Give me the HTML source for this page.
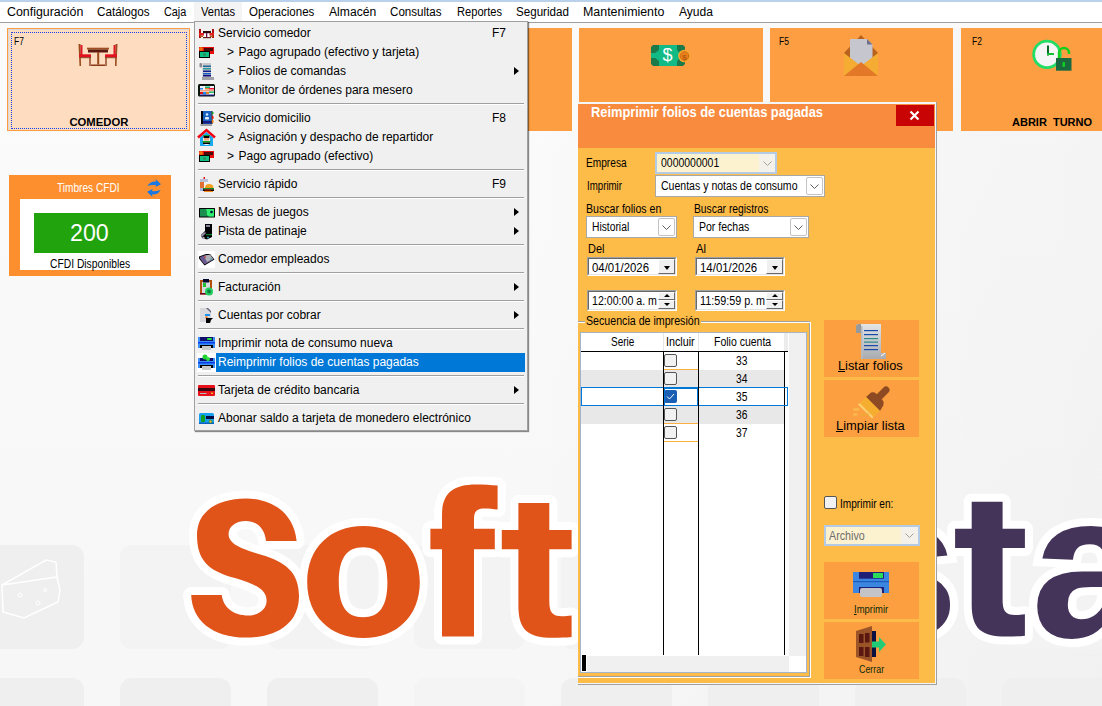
<!DOCTYPE html>
<html><head><meta charset="utf-8">
<style>
*{margin:0;padding:0;box-sizing:border-box}
html,body{width:1102px;height:706px;overflow:hidden;font-family:"Liberation Sans",sans-serif;position:relative}
body{background:linear-gradient(#fbfbfb 0px,#f9f9f9 350px,#f8f8f8 500px,#f7f7f7 706px)}
.a{position:absolute}
.t{position:absolute;white-space:nowrap;line-height:1}
.wm{position:absolute;background:#ebebeb;border-radius:12px}
.lg{position:absolute;font-weight:bold;font-size:191px;line-height:1;white-space:nowrap;transform-origin:0 0}
.lo{color:#fff;-webkit-text-stroke:15px #fff}
.mi{position:absolute;font-size:12px;line-height:19px;height:19px;white-space:nowrap;color:#000}
.sep{position:absolute;left:198px;width:326px;height:1px;background:#a0a0a0;box-shadow:0 1px 0 #fff}
.arr{position:absolute;left:513.5px;width:0;height:0;border-left:5px solid #000;border-top:4px solid transparent;border-bottom:4px solid transparent}
.ic{position:absolute}
</style></head>
<body>

<div class="a" style="left:0px;top:0px;width:1102px;height:2px;background:#b9d1ea"></div>
<div class="a" style="left:0px;top:2px;width:1102px;height:20px;background:#fff"></div>
<div class="a" style="left:0px;top:22px;width:1102px;height:1px;background:#a0a0a0"></div>
<div class="a" style="left:0px;top:23px;width:1102px;height:5px;background:#fafafa"></div>
<div class="a" style="left:194px;top:2px;width:48px;height:19px;background:#f4f4f4"></div>
<div class="t" style="left:7.30px;top:5.84px;font-size:12px;color:#000;font-weight:normal;transform:scaleX(1.0317);transform-origin:0 0;">Configuración</div>
<div class="t" style="left:97.30px;top:5.84px;font-size:12px;color:#000;font-weight:normal;transform:scaleX(0.9753);transform-origin:0 0;">Catálogos</div>
<div class="t" style="left:164.40px;top:5.84px;font-size:12px;color:#000;font-weight:normal;transform:scaleX(0.9038);transform-origin:0 0;">Caja</div>
<div class="t" style="left:200.70px;top:5.84px;font-size:12px;color:#000;font-weight:normal;transform:scaleX(0.9292);transform-origin:0 0;">Ventas</div>
<div class="t" style="left:249.40px;top:5.84px;font-size:12px;color:#000;font-weight:normal;transform:scaleX(0.9597);transform-origin:0 0;">Operaciones</div>
<div class="t" style="left:329.20px;top:5.84px;font-size:12px;color:#000;font-weight:normal;transform:scaleX(1.0106);transform-origin:0 0;">Almacén</div>
<div class="t" style="left:390.30px;top:5.84px;font-size:12px;color:#000;font-weight:normal;transform:scaleX(0.9670);transform-origin:0 0;">Consultas</div>
<div class="t" style="left:456.60px;top:5.84px;font-size:12px;color:#000;font-weight:normal;transform:scaleX(0.9262);transform-origin:0 0;">Reportes</div>
<div class="t" style="left:516.40px;top:5.84px;font-size:12px;color:#000;font-weight:normal;transform:scaleX(0.9660);transform-origin:0 0;">Seguridad</div>
<div class="t" style="left:583.30px;top:5.84px;font-size:12px;color:#000;font-weight:normal;transform:scaleX(1.0337);transform-origin:0 0;">Mantenimiento</div>
<div class="t" style="left:678.70px;top:5.84px;font-size:12px;color:#000;font-weight:normal;transform:scaleX(1.0048);transform-origin:0 0;">Ayuda</div>
<div class="a" style="left:0px;top:28px;width:1102px;height:678px;background:linear-gradient(to right,rgba(0,0,0,0) 0px,rgba(0,0,0,0) 500px,rgba(0,0,0,0.022) 1102px)"></div>
<div class="a" style="left:-27px;top:545px;width:111px;height:104px;background:#efefef;border-radius:12px"></div>
<div class="a" style="left:120px;top:545px;width:111px;height:104px;background:#f3f3f3;border-radius:12px"></div>
<div class="a" style="left:267px;top:545px;width:111px;height:104px;background:#f3f3f3;border-radius:12px"></div>
<div class="a" style="left:414px;top:545px;width:111px;height:104px;background:#f3f3f3;border-radius:12px"></div>
<div class="a" style="left:561px;top:545px;width:111px;height:104px;background:#f3f3f3;border-radius:12px"></div>
<div class="a" style="left:708px;top:545px;width:111px;height:104px;background:#f3f3f3;border-radius:12px"></div>
<div class="a" style="left:855px;top:545px;width:111px;height:104px;background:#f3f3f3;border-radius:12px"></div>
<div class="a" style="left:1002px;top:545px;width:111px;height:104px;background:#f3f3f3;border-radius:12px"></div>
<div class="a" style="left:-27px;top:678px;width:111px;height:104px;background:#efefef;border-radius:12px"></div>
<div class="a" style="left:120px;top:678px;width:111px;height:104px;background:#efefef;border-radius:12px"></div>
<div class="a" style="left:267px;top:678px;width:111px;height:104px;background:#efefef;border-radius:12px"></div>
<div class="a" style="left:414px;top:678px;width:111px;height:104px;background:#f4f4f4;border-radius:12px"></div>
<div class="a" style="left:561px;top:678px;width:111px;height:104px;background:#efefef;border-radius:12px"></div>
<div class="a" style="left:708px;top:678px;width:111px;height:104px;background:#efefef;border-radius:12px"></div>
<div class="a" style="left:855px;top:678px;width:111px;height:104px;background:#efefef;border-radius:12px"></div>
<div class="a" style="left:1002px;top:678px;width:111px;height:104px;background:#efefef;border-radius:12px"></div>
<svg class="a" style="left:0;top:540px" width="90" height="110" viewBox="0 540 90 110"><path d="M2 585L46 560L56 562L57 577L60 590L58 602L24 618L3 612Z M2 585L57 577" stroke="#fff" stroke-width="1.5" fill="none"/><circle cx="20" cy="595" r="2" stroke="#fff" fill="none"/><circle cx="38" cy="603" r="2" stroke="#fff" fill="none"/><circle cx="45" cy="590" r="1.5" stroke="#fff" fill="none"/></svg>
<svg class="a" style="left:0;top:0" width="1102" height="706"><path d="M246 498.5C272 498.5 294 513 296.6 541L266 541C265 529 257 521 246 521C235 521 228.6 527 228.6 534C228.6 543 238 548 262 555C285 562 299 572 299 596C299 624 276 637.6 246 637.6C212 637.6 192 620 191.2 595L221.8 595C223 607 233 615.5 248.5 615.5C259 615.5 266.6 609 266.6 600.8C266.6 590 258 585 235 578C208 571 197 560 197 535C197 511 218 498.5 246 498.5Z" fill="#fff" stroke="#fff" stroke-width="16" stroke-linejoin="round"/></svg>
<svg class="a" style="left:0;top:0" width="1102" height="706"><path d="M307.2 582.0C307.2 548.4 329.7 526.0 363.5 526.0C397.3 526.0 419.8 548.4 419.8 582.0C419.8 615.6 397.3 638.0 363.5 638.0C329.7 638.0 307.2 615.6 307.2 582.0ZM338.8 582.2C338.8 558.4 346.6 547.2 363.1 547.2C379.6 547.2 387.4 558.4 387.4 582.2C387.4 606.0 379.6 617.2 363.1 617.2C346.6 617.2 338.8 606.0 338.8 582.2Z" fill="#fff" fill-rule="evenodd" stroke="#fff" stroke-width="16"/></svg>
<svg class="a" style="left:0;top:0" width="1102" height="706"><path d="M442 636.5V549.2H430.4V528.8H442V515C442 494 452 484.5 476 484.5C484 484.5 491 485 497.6 485.5V509.5C493 509 489 508.5 485 508.5C477 508.5 474 511 474 519V528.8H494.8V549.2H474V636.5Z" fill="#fff" stroke="#fff" stroke-width="16" stroke-linejoin="round"/></svg>
<svg class="a" style="left:0;top:0" width="1102" height="706"><path d="M518.4 503H549.3V530.1H571.6V549.3H549.3V601C549.3 612 552 616.3 562 616.3C565 616.3 568 616 571.6 615.5V637C566 637.6 560 637.8 553 637.8C528 637.8 518.4 630 518.4 606V549.3H501.8V530.1H518.4Z" fill="#fff" stroke="#fff" stroke-width="16" stroke-linejoin="round"/></svg>
<div class="lg lo" style="left:840.3px;top:462.5px;transform:scale(1.118,1.076)">s</div>
<svg class="a" style="left:0;top:0" width="1102" height="706"><path d="M518.4 503H549.3V530.1H571.6V549.3H549.3V601C549.3 612 552 616.3 562 616.3C565 616.3 568 616 571.6 615.5V637C566 637.6 560 637.8 553 637.8C528 637.8 518.4 630 518.4 606V549.3H501.8V530.1H518.4Z" transform="translate(453.3,-1.3)" fill="#fff" stroke="#fff" stroke-width="16" stroke-linejoin="round"/></svg>
<div class="lg lo" style="left:1031.3px;top:462.5px;transform:scale(1.118,1.076)">a</div>
<svg class="a" style="left:0;top:0" width="1102" height="706"><path d="M246 498.5C272 498.5 294 513 296.6 541L266 541C265 529 257 521 246 521C235 521 228.6 527 228.6 534C228.6 543 238 548 262 555C285 562 299 572 299 596C299 624 276 637.6 246 637.6C212 637.6 192 620 191.2 595L221.8 595C223 607 233 615.5 248.5 615.5C259 615.5 266.6 609 266.6 600.8C266.6 590 258 585 235 578C208 571 197 560 197 535C197 511 218 498.5 246 498.5Z" fill="#e0541a"/></svg>
<svg class="a" style="left:0;top:0" width="1102" height="706"><path d="M307.2 582.0C307.2 548.4 329.7 526.0 363.5 526.0C397.3 526.0 419.8 548.4 419.8 582.0C419.8 615.6 397.3 638.0 363.5 638.0C329.7 638.0 307.2 615.6 307.2 582.0ZM338.8 582.2C338.8 558.4 346.6 547.2 363.1 547.2C379.6 547.2 387.4 558.4 387.4 582.2C387.4 606.0 379.6 617.2 363.1 617.2C346.6 617.2 338.8 606.0 338.8 582.2Z" fill="#e0541a" fill-rule="evenodd"/></svg>
<svg class="a" style="left:0;top:0" width="1102" height="706"><path d="M442 636.5V549.2H430.4V528.8H442V515C442 494 452 484.5 476 484.5C484 484.5 491 485 497.6 485.5V509.5C493 509 489 508.5 485 508.5C477 508.5 474 511 474 519V528.8H494.8V549.2H474V636.5Z" fill="#e0541a"/></svg>
<svg class="a" style="left:0;top:0" width="1102" height="706"><path d="M518.4 503H549.3V530.1H571.6V549.3H549.3V601C549.3 612 552 616.3 562 616.3C565 616.3 568 616 571.6 615.5V637C566 637.6 560 637.8 553 637.8C528 637.8 518.4 630 518.4 606V549.3H501.8V530.1H518.4Z" fill="#e0541a"/></svg>
<div class="lg" style="left:840.3px;top:462.5px;transform:scale(1.118,1.076);color:#45345a">s</div>
<svg class="a" style="left:0;top:0" width="1102" height="706"><path d="M518.4 503H549.3V530.1H571.6V549.3H549.3V601C549.3 612 552 616.3 562 616.3C565 616.3 568 616 571.6 615.5V637C566 637.6 560 637.8 553 637.8C528 637.8 518.4 630 518.4 606V549.3H501.8V530.1H518.4Z" transform="translate(453.3,-1.3)" fill="#45345a"/></svg>
<div class="lg" style="left:1031.3px;top:462.5px;transform:scale(1.118,1.076);color:#45345a">a</div>
<div class="a" style="left:7px;top:28px;width:183px;height:103px;background:#fddcbf;border:1px solid #fb9d40;box-shadow:inset 1px 1px 0 #d8d8e0"></div>
<div class="a" style="left:11px;top:32px;width:176px;height:97px;border:1px dotted #1a3ee8"></div>
<div class="t" style="left:13.60px;top:36.93px;font-size:10px;color:#000;font-weight:normal;transform:scaleX(0.8506);transform-origin:0 0;">F7</div>
<div class="t" style="left:69.4px;top:117.33px;font-size:11.3px;letter-spacing:0px;color:#000;font-weight:bold;">COMEDOR</div>
<div class="a" style="left:195px;top:28px;width:377px;height:103px;background:#fc9e41"></div>
<div class="a" style="left:579px;top:28px;width:184px;height:103px;background:#fc9e41"></div>
<div class="a" style="left:770px;top:28px;width:183px;height:103px;background:#fc9e41"></div>
<div class="t" style="left:778.60px;top:36.93px;font-size:10px;color:#000;font-weight:normal;transform:scaleX(0.8506);transform-origin:0 0;">F5</div>
<div class="a" style="left:961px;top:28px;width:141px;height:103px;background:#fc9e41"></div>
<div class="t" style="left:971.70px;top:36.93px;font-size:10px;color:#000;font-weight:normal;transform:scaleX(0.8506);transform-origin:0 0;">F2</div>
<div class="t" style="left:1012px;top:117.19px;font-size:11px;letter-spacing:0px;color:#000;font-weight:bold;">ABRIR&nbsp;&nbsp;TURNO</div>
<div class="a" style="left:9px;top:175px;width:162px;height:101px;background:#fd8f2f"></div>
<div class="t" style="left:57.00px;top:181.84px;font-size:12px;color:#fff;font-weight:normal;transform:scaleX(0.8432);transform-origin:0 0;">Timbres CFDI</div>
<div class="a" style="left:20px;top:199px;width:140px;height:71px;background:#fff"></div>
<div class="a" style="left:34px;top:213px;width:114px;height:40px;background:#21a30d"></div>
<div class="t" style="left:69.71px;top:222.31px;font-size:23.5px;color:#fff;font-weight:normal;transform:scaleX(0.9859);transform-origin:0 0;">200</div>
<div class="t" style="left:49.90px;top:257.84px;font-size:12px;color:#000;font-weight:normal;transform:scaleX(0.8579);transform-origin:0 0;">CFDI Disponibles</div>

<svg class="a" style="left:0;top:0" width="1102" height="706" viewBox="0 0 1102 706">
 <!-- table & chairs -->
 <g>
  <path d="M78.5 44L80.5 44L81 66L79.5 66Z" fill="#9a4a1c"/>
  <rect x="80.5" y="45" width="2" height="10" fill="#e01828"/>
  <rect x="79" y="54.3" width="12" height="3" fill="#e0101c"/>
  <rect x="80" y="57.2" width="11" height="1" fill="#8a4020"/>
  <rect x="89.3" y="57" width="1.4" height="9" fill="#8a4020"/>
  <rect x="87" y="47.7" width="22" height="1.8" fill="#a05020"/>
  <rect x="88" y="49.5" width="20" height="3" fill="#5a1a10"/>
  <rect x="97.2" y="52" width="2" height="12.5" fill="#9a4a1c"/>
  <rect x="91" y="64.5" width="14" height="1.5" fill="#8a3a18"/>
  <path d="M115.5 44L117.5 44L116.5 66L115 66Z" fill="#9a4a1c"/>
  <rect x="113.5" y="45" width="2" height="10" fill="#e01828"/>
  <rect x="105" y="54.3" width="12" height="3" fill="#e0101c"/>
  <rect x="105" y="57.2" width="11" height="1" fill="#8a4020"/>
  <rect x="105.3" y="57" width="1.4" height="9" fill="#8a4020"/>
 </g>
 <!-- money -->
 <g>
  <path d="M653 45H683L685 47V64L683 66H653L651 64V47Z" fill="#1a7a4a"/>
  <path d="M659 45H677V50L680 53V58L677 61V66H659V61L654 57V54L659 50Z" fill="#12bb85"/>
  <path d="M659 45H677V66H659Z" fill="#12bb85"/>
  <path d="M651 53H659V58H651Z" fill="#12bb85"/>
  <text x="667.5" y="61" font-family="Liberation Sans" font-size="18" fill="#fff" text-anchor="middle">$</text>
  <circle cx="684.5" cy="56" r="6.3" fill="#f7a830"/>
  <circle cx="684.5" cy="56" r="4.3" fill="#e8801c" stroke="#c86010" stroke-width="0.8"/>
  <text x="684.5" y="59.5" font-family="Liberation Sans" font-weight="bold" font-size="8" fill="#b85a10" text-anchor="middle">$</text>
 </g>
 <!-- envelope -->
 <g>
  <path d="M861 35L878 53V76H844V53Z" fill="#b8621e"/>
  <path d="M850 39H867L872.5 44.5V64H850Z" fill="#c6c6ce"/>
  <path d="M867 39L872.5 44.5H867Z" fill="#70708a"/>
  <path d="M844 53L861 66L878 53V76H844Z" fill="#f5ac32"/>
  <path d="M844 76L861 62L878 76Z" fill="#e27828"/>
 </g>
 <!-- clock & lock -->
 <g>
  <circle cx="1047" cy="54.4" r="13.3" fill="#f6f6f6" stroke="#22dd66" stroke-width="2.8"/>
  <rect x="1047" y="45.5" width="2" height="10" fill="#0a6a2a"/>
  <rect x="1047" y="53" width="7" height="2" fill="#10c030"/>
  <path d="M1059 58V53A5 5 0 0 1 1069 53V54" stroke="#12d020" stroke-width="2.4" fill="none"/>
  <rect x="1056" y="58" width="15.5" height="12.7" fill="#1a6a40"/>
  <rect x="1062.5" y="62" width="2.5" height="5" rx="1" fill="#12d020"/>
 </g>
 <!-- refresh arrows (timbres) -->
 <g>
  <path d="M147.5 186Q150 181 156 181.5L155.5 179L161 184.3L155.5 187L156 185Q151 184.5 147.5 186Z" fill="#1a78e0"/>
  <path d="M160.5 190Q158 195 152 194.5L152.5 197L147 191.7L152.5 189L152 191Q157 191.5 160.5 190Z" fill="#1a78e0"/>
 </g>
</svg>

<div class="a" style="left:194px;top:21px;width:334px;height:410px;background:#f0f0f0;border:1px solid #a0a0a0;box-shadow:1px 1px 1px rgba(0,0,0,.45)"></div>
<!--MENU-->
<svg class="ic" style="left:197px;top:24px" width="20" height="19" viewBox="-2 -1 20 19"><rect x="5" y="8" width="2" height="4" fill="#fff"/><rect x="8" y="8" width="2" height="4" fill="#fff"/><rect x="0" y="4" width="2" height="9" fill="#b01010"/><rect x="0" y="8" width="5" height="2.5" fill="#e82020"/><rect x="1" y="10.5" width="3" height="1.5" fill="#a86020"/><rect x="4" y="6" width="8" height="2.2" fill="#2a0a0a"/><rect x="7" y="8" width="1.3" height="4" fill="#6a1050"/><rect x="4" y="12" width="8" height="1.2" fill="#6a2010"/><rect x="13" y="4" width="2" height="9" fill="#b01010"/><rect x="10.5" y="8" width="4.5" height="2.5" fill="#e82020"/><rect x="11" y="10.5" width="3" height="1.5" fill="#a86020"/></svg>
<div class="mi" style="left:218px;top:24px;color:#000">Servicio comedor</div>
<div class="mi" style="left:492px;top:24px">F7</div>
<svg class="ic" style="left:197px;top:43px" width="20" height="19" viewBox="-2 -1 20 19"><rect x="0" y="3" width="15" height="7" fill="#e80c0c"/><rect x="5" y="4" width="9" height="3" fill="#4a0808"/><circle cx="2" cy="5" r="2" fill="#f07010"/><rect x="0" y="7" width="11" height="7" fill="#000"/><rect x="1" y="8" width="9" height="5" fill="#10c080"/><circle cx="5.5" cy="10.5" r="1.5" fill="#2a8a60"/></svg>
<div class="mi" style="left:227px;top:43px;color:#000">&gt;</div>
<div class="mi" style="left:238.5px;top:43px;color:#000">Pago agrupado (efectivo y tarjeta)</div>
<svg class="ic" style="left:197px;top:62px" width="20" height="19" viewBox="-2 -1 20 19"><rect x="0.5" y="0" width="2.5" height="4.5" rx="1" fill="#8a8a90"/><rect x="3.5" y="0" width="8.5" height="17" fill="#c8c8cc"/><rect x="4" y="2.5" width="8" height="1.5" fill="#1a6a9a"/><rect x="4" y="5" width="8" height="1.5" fill="#2a9a9a"/><rect x="4" y="7.5" width="8" height="1.5" fill="#10208a"/><rect x="4" y="10" width="8" height="1.5" fill="#1a5ac0"/><rect x="4" y="12" width="8" height="1.5" fill="#10107a"/><rect x="3" y="14" width="12" height="3" fill="#a0a0a8"/></svg>
<div class="mi" style="left:227px;top:62px;color:#000">&gt;</div>
<div class="mi" style="left:238.5px;top:62px;color:#000">Folios de comandas</div>
<div class="arr" style="top:66.5px"></div>
<svg class="ic" style="left:197px;top:81px" width="20" height="19" viewBox="-2 -1 20 19"><rect x="-1" y="2" width="17" height="12.5" rx="1.5" fill="#0a140a"/><rect x="1" y="4" width="14" height="9" fill="#f0f0f8"/><rect x="1" y="6" width="3" height="1.5" fill="#2a8ae0"/><rect x="6" y="4.5" width="5" height="1.5" fill="#10b070"/><rect x="6" y="6" width="4" height="1.5" fill="#f08030"/><rect x="10" y="6" width="5" height="1.5" fill="#f01030"/><rect x="1" y="8" width="14" height="1.5" fill="#f0a080"/><rect x="10" y="9.5" width="5" height="1.5" fill="#20c070"/><rect x="1" y="10" width="3" height="2" fill="#e01010"/><rect x="4" y="10" width="3" height="2.5" fill="#1a8af0"/><rect x="7" y="10" width="3" height="2" fill="#e08020"/><rect x="1" y="12.5" width="14" height="1" fill="#2020a0"/></svg>
<div class="mi" style="left:227px;top:81px;color:#000">&gt;</div>
<div class="mi" style="left:238.5px;top:81px;color:#000">Monitor de órdenes para mesero</div>
<div class="sep" style="top:103px"></div>
<svg class="ic" style="left:197px;top:109px" width="20" height="19" viewBox="-2 -1 20 19"><rect x="1.5" y="14" width="11.5" height="2" fill="#a0a0a0"/><rect x="2" y="1" width="2" height="13" fill="#000"/><rect x="4" y="1" width="8.5" height="13" fill="#1a60c0"/><rect x="4" y="11" width="8.5" height="2.5" fill="#1a1a80"/><rect x="12.5" y="1" width="1" height="13" fill="#000"/><circle cx="8" cy="4.5" r="1.3" fill="#d0f0ff"/><rect x="6" y="7" width="4" height="2.5" rx="1" fill="#e0f0ff"/><rect x="13" y="2" width="1.5" height="2" fill="#10a020"/><rect x="13" y="6" width="1.5" height="3" fill="#f01010"/><rect x="13" y="10" width="1.5" height="3" fill="#f08010"/></svg>
<div class="mi" style="left:218px;top:109px;color:#000">Servicio domicilio</div>
<div class="mi" style="left:492px;top:109px">F8</div>
<svg class="ic" style="left:197px;top:128px" width="20" height="19" viewBox="-2 -1 20 19"><path d="M1 8.5L7.5 3L14 8.5V17H1Z" fill="#18a8f0"/><rect x="4" y="6" width="7" height="10" rx="3" fill="#f0f0f0"/><rect x="4.5" y="6" width="6" height="3" fill="#000"/><rect x="4.5" y="6" width="6" height="1" fill="#10a030"/><rect x="5" y="9" width="5" height="2.5" fill="#f0a070"/><rect x="3.5" y="12" width="8" height="1.5" fill="#10a020"/><rect x="4" y="13.5" width="7" height="1.5" fill="#000"/><path d="M-1 8.5L7.5 1L16 8.5" stroke="#f00010" stroke-width="2.4" fill="none"/></svg>
<div class="mi" style="left:227px;top:128px;color:#000">&gt;</div>
<div class="mi" style="left:238.5px;top:128px;color:#000">Asignación y despacho de repartidor</div>
<svg class="ic" style="left:197px;top:147px" width="20" height="19" viewBox="-2 -1 20 19"><rect x="0" y="3" width="15" height="7" fill="#e80c0c"/><rect x="5" y="4" width="9" height="3" fill="#4a0808"/><circle cx="2" cy="5" r="2" fill="#f07010"/><rect x="0" y="7" width="11" height="7" fill="#000"/><rect x="1" y="8" width="9" height="5" fill="#10c080"/><circle cx="5.5" cy="10.5" r="1.5" fill="#2a8a60"/></svg>
<div class="mi" style="left:227px;top:147px;color:#000">&gt;</div>
<div class="mi" style="left:238.5px;top:147px;color:#000">Pago agrupado (efectivo)</div>
<div class="sep" style="top:169px"></div>
<svg class="ic" style="left:197px;top:175px" width="20" height="19" viewBox="-2 -1 20 19"><rect x="4.5" y="1" width="1.5" height="2.5" fill="#e81010"/><rect x="1" y="3" width="8" height="3" fill="#b8c0d8"/><rect x="1" y="6" width="4" height="9" fill="#e07030"/><rect x="1" y="12" width="3" height="3" fill="#a0b0e0"/><path d="M6 12Q6 8 10 8Q14.5 8 14.5 12Z" fill="#f0a020"/><rect x="4" y="12" width="11" height="1.3" fill="#109020"/><rect x="4" y="13.3" width="11" height="1.7" fill="#100808"/><rect x="6" y="13.5" width="6" height="1" fill="#d01010"/><rect x="5" y="15" width="9" height="1" fill="#f09010"/></svg>
<div class="mi" style="left:218px;top:175px;color:#000">Servicio rápido</div>
<div class="mi" style="left:492px;top:175px">F9</div>
<div class="sep" style="top:197px"></div>
<svg class="ic" style="left:197px;top:203px" width="20" height="19" viewBox="-2 -1 20 19"><rect x="0" y="4" width="16" height="9.5" rx="0.5" fill="#000"/><rect x="1" y="5" width="14" height="7.5" fill="#1a9050"/><path d="M7 5H15V12.5H10Q7 11 8 8Z" fill="#30f070"/><circle cx="12.5" cy="8" r="1.3" fill="#001040"/></svg>
<div class="mi" style="left:218px;top:203px;color:#000">Mesas de juegos</div>
<div class="arr" style="top:207.5px"></div>
<svg class="ic" style="left:197px;top:222px" width="20" height="19" viewBox="-2 -1 20 19"><path d="M6 1H13V14L8 16.5L3 15L2 12L6 8Z" fill="#000"/><rect x="7" y="2" width="4" height="2" fill="#8080a0"/><path d="M2 12L6 9L7 10L3 14Z" fill="#9a90b0"/><rect x="7" y="11" width="6" height="1.2" fill="#108030"/><circle cx="4.5" cy="15" r="1.2" fill="#b0b0c0"/><circle cx="9" cy="14.5" r="1" fill="#20b0c0"/></svg>
<div class="mi" style="left:218px;top:222px;color:#000">Pista de patinaje</div>
<div class="arr" style="top:226.5px"></div>
<div class="sep" style="top:244px"></div>
<svg class="ic" style="left:197px;top:250px" width="20" height="19" viewBox="-2 -1 20 19"><rect x="-1" y="0" width="17" height="17" fill="#fff"/><path d="M0 5.5L7 3L11 3L15.5 8.5L5.5 14.5L0 7.5Z" fill="#000"/><path d="M1 6L7 4L11 4L14.5 8.5L5.5 13.5L1 7.5Z" fill="#6a5a90"/><path d="M5 5L11 3.5L14 8L8 11Z" fill="#b0b0b8"/><circle cx="6" cy="6" r="0.8" fill="#d01010"/><circle cx="12" cy="8" r="0.8" fill="#10a0a0"/></svg>
<div class="mi" style="left:218px;top:250px;color:#000">Comedor empleados</div>
<div class="sep" style="top:272px"></div>
<svg class="ic" style="left:197px;top:278px" width="20" height="19" viewBox="-2 -1 20 19"><rect x="1" y="1" width="12" height="14.5" fill="#b05010"/><rect x="1" y="14" width="12" height="1.5" fill="#700020"/><rect x="3" y="3" width="8" height="11" fill="#d8d8e0"/><rect x="4" y="0" width="6" height="3.5" fill="#000830"/><rect x="4" y="4" width="3" height="4" fill="#20c030"/><circle cx="10" cy="12.5" r="4" fill="#20d060"/><circle cx="10" cy="12.5" r="2" fill="#108040"/></svg>
<div class="mi" style="left:218px;top:278px;color:#000">Facturación</div>
<div class="arr" style="top:282.5px"></div>
<div class="sep" style="top:300px"></div>
<svg class="ic" style="left:197px;top:306px" width="20" height="19" viewBox="-2 -1 20 19"><path d="M1 1H7L12 6V15H1Z" fill="#d8d8dc"/><path d="M7 1L12 6L12 4L9 1Z" fill="#606078"/><rect x="6" y="7" width="5" height="2" fill="#1a90f0"/><circle cx="7.5" cy="10.5" r="1.2" fill="#f07020"/><path d="M7 11H14L12 13L11 16H7Z" fill="#000"/></svg>
<div class="mi" style="left:218px;top:306px;color:#000">Cuentas por cobrar</div>
<div class="arr" style="top:310.5px"></div>
<div class="sep" style="top:328px"></div>
<svg class="ic" style="left:197px;top:334px" width="20" height="19" viewBox="-2 -1 20 19"><rect x="-1" y="2" width="17" height="11" fill="#3a90f8"/><rect x="1" y="2" width="13" height="4" fill="#10106a"/><rect x="8" y="3" width="5" height="2" rx="1" fill="#20e040"/><rect x="-1" y="7" width="17" height="1.5" fill="#0a3ae8"/><rect x="1" y="10" width="13" height="3" fill="#000"/><rect x="3" y="11" width="9" height="4" fill="#c8c8c8"/></svg>
<div class="mi" style="left:218px;top:334px;color:#000">Imprimir nota de consumo nueva</div>
<div class="a" style="left:216px;top:353px;width:309px;height:19px;background:#0078d7"></div>
<div class="a" style="left:197px;top:353px;width:19px;height:19px;background:#fff;border-bottom:1px solid #b0b0b0"></div>
<svg class="ic" style="left:197px;top:353px" width="20" height="19" viewBox="-2 -1 20 19"><rect x="-2" y="0" width="19" height="18" fill="#fff"/><rect x="-1" y="4" width="17" height="10" fill="#3a90f8"/><rect x="1" y="4" width="13" height="3" fill="#10106a"/><rect x="-1" y="8" width="17" height="1.5" fill="#0a3ae8"/><rect x="1" y="11" width="13" height="3" fill="#000"/><rect x="3" y="12" width="9" height="4" fill="#c8c8c8"/><circle cx="6" cy="3" r="2.5" fill="#20d030"/><circle cx="9" cy="5" r="2" fill="#30e040"/></svg>
<div class="mi" style="left:218px;top:353px;color:#fff">Reimprimir folios de cuentas pagadas</div>
<div class="sep" style="top:375px"></div>
<svg class="ic" style="left:197px;top:381px" width="20" height="19" viewBox="-2 -1 20 19"><rect x="-1" y="3" width="17" height="11" rx="1" fill="#e8101a"/><rect x="-1" y="6" width="17" height="3" fill="#3a0810"/><rect x="1" y="11" width="6.5" height="1" fill="#b8b8b8"/><rect x="12" y="10.5" width="2" height="1.5" fill="#f0b020"/></svg>
<div class="mi" style="left:218px;top:381px;color:#000">Tarjeta de crédito bancaria</div>
<div class="arr" style="top:385.5px"></div>
<div class="sep" style="top:403px"></div>
<svg class="ic" style="left:197px;top:409px" width="20" height="19" viewBox="-2 -1 20 19"><rect x="0" y="3" width="15" height="11" rx="1.5" fill="#18a0f0"/><rect x="0" y="12.5" width="15" height="1.5" fill="#0a60c0"/><rect x="2" y="5" width="4" height="7" rx="1" fill="#10a020"/><rect x="7" y="6" width="8" height="3" fill="#000840"/><circle cx="11.5" cy="11.5" r="1.5" fill="#f0b020" stroke="#109020" stroke-width="0.6"/></svg>
<div class="mi" style="left:218px;top:409px;color:#000">Abonar saldo a tarjeta de monedero electrónico</div>
<!--/MENU-->

<div class="a" style="left:578px;top:102px;width:359px;height:583px;background:#a0a0a0"></div>
<div class="a" style="left:578px;top:102px;width:358px;height:582px;background:#f4f7f9"></div>
<div class="a" style="left:578px;top:104px;width:357px;height:579px;background:#fdbb48"></div>
<div class="a" style="left:578px;top:104px;width:357px;height:44px;background:#f98b3e"></div>
<div class="t" style="left:590.60px;top:105.30px;font-size:14.3px;color:#fff;font-weight:bold;transform:scaleX(0.8983);transform-origin:0 0;">Reimprimir folios de cuentas pagadas</div>
<div class="a" style="left:896px;top:105px;width:38px;height:21px;background:#c80404"></div>
<svg class="a" style="left:909px;top:110px" width="11" height="11" viewBox="0 0 11 11"><path d="M1.5 1.5L9.5 9.5M9.5 1.5L1.5 9.5" stroke="#fff" stroke-width="2.2"/></svg>
<div class="t" style="left:585.50px;top:157.34px;font-size:12px;color:#000;font-weight:normal;transform:scaleX(0.8460);transform-origin:0 0;">Empresa</div>
<div class="t" style="left:586.89px;top:180.34px;font-size:12px;color:#000;font-weight:normal;transform:scaleX(0.8080);transform-origin:0 0;">Imprimir</div>
<div class="t" style="left:586.30px;top:203.14px;font-size:12px;color:#000;font-weight:normal;transform:scaleX(0.8819);transform-origin:0 0;">Buscar folios en</div>
<div class="t" style="left:693.60px;top:203.14px;font-size:12px;color:#000;font-weight:normal;transform:scaleX(0.8582);transform-origin:0 0;">Buscar registros</div>
<div class="a" style="left:655px;top:152px;width:122px;height:22px;background:#fdf2cf;border:2px solid #b4cbe6"></div>
<div class="a" style="left:759px;top:154px;width:16px;height:18px;background:#f3f1ea"></div>
<svg class="a" style="left:763px;top:161px" width="9" height="6" viewBox="0 0 9 6"><path d="M0.5 0.5L4.5 4.5L8.5 0.5" stroke="#a0a0a0" fill="none" stroke-width="1"/></svg>
<div class="t" style="left:660.60px;top:157.34px;font-size:12px;color:#000;font-weight:normal;transform:scaleX(0.8723);transform-origin:0 0;">0000000001</div>
<div class="a" style="left:655px;top:175px;width:170px;height:22px;background:#fff;border:1px solid #a8a8a8"></div>
<div class="a" style="left:806px;top:177px;width:17px;height:18px;background:#fff;border:1px solid #c4c4c4;border-radius:2px"></div>
<svg class="a" style="left:810px;top:184px" width="9" height="6" viewBox="0 0 9 6"><path d="M0.5 0.5L4.5 4.5L8.5 0.5" stroke="#606060" fill="none" stroke-width="1"/></svg>
<div class="t" style="left:660.60px;top:180.34px;font-size:12px;color:#000;font-weight:normal;transform:scaleX(0.8783);transform-origin:0 0;">Cuentas y notas de consumo</div>
<div class="a" style="left:586px;top:216px;width:91px;height:22px;background:#fff;border:1px solid #a8a8a8"></div>
<div class="a" style="left:658px;top:218px;width:17px;height:18px;background:#fff;border:1px solid #c4c4c4;border-radius:2px"></div>
<svg class="a" style="left:662px;top:225px" width="9" height="6" viewBox="0 0 9 6"><path d="M0.5 0.5L4.5 4.5L8.5 0.5" stroke="#606060" fill="none" stroke-width="1"/></svg>
<div class="t" style="left:591.70px;top:221.14px;font-size:12px;color:#000;font-weight:normal;transform:scaleX(0.8576);transform-origin:0 0;">Historial</div>
<div class="a" style="left:693px;top:216px;width:116px;height:22px;background:#fff;border:1px solid #a8a8a8"></div>
<div class="a" style="left:790px;top:218px;width:17px;height:18px;background:#fff;border:1px solid #c4c4c4;border-radius:2px"></div>
<svg class="a" style="left:794px;top:225px" width="9" height="6" viewBox="0 0 9 6"><path d="M0.5 0.5L4.5 4.5L8.5 0.5" stroke="#606060" fill="none" stroke-width="1"/></svg>
<div class="t" style="left:698.80px;top:221.14px;font-size:12px;color:#000;font-weight:normal;transform:scaleX(0.8769);transform-origin:0 0;">Por fechas</div>
<div class="t" style="left:587.60px;top:242.84px;font-size:12px;color:#000;font-weight:normal;transform:scaleX(0.9112);transform-origin:0 0;">Del</div>
<div class="t" style="left:695.80px;top:242.84px;font-size:12px;color:#000;font-weight:normal;transform:scaleX(0.9396);transform-origin:0 0;">Al</div>
<div class="a" style="left:587px;top:257px;width:90px;height:19px;background:#fff;border-top:1px solid #a0a0a0;border-left:1px solid #a0a0a0;border-right:1px solid #fff;border-bottom:1px solid #fff"></div>
<div class="a" style="left:588px;top:258px;width:88px;height:17px;border-top:1px solid #696969;border-left:1px solid #696969;border-right:1px solid #e3e3e3;border-bottom:1px solid #e3e3e3"></div>
<div class="a" style="left:658px;top:259px;width:17px;height:15px;background:#f0f0f0;border-top:1px solid #fff;border-left:1px solid #fff;border-right:1px solid #696969;border-bottom:1px solid #696969"></div>
<div class="a" style="left:664px;top:266px;width:0;height:0;border-left:3.5px solid transparent;border-right:3.5px solid transparent;border-top:4px solid #000"></div>
<div class="t" style="left:591.60px;top:261.84px;font-size:12px;color:#000;font-weight:normal;transform:scaleX(0.9489);transform-origin:0 0;">04/01/2026</div>
<div class="a" style="left:695px;top:257px;width:90px;height:19px;background:#fff;border-top:1px solid #a0a0a0;border-left:1px solid #a0a0a0;border-right:1px solid #fff;border-bottom:1px solid #fff"></div>
<div class="a" style="left:696px;top:258px;width:88px;height:17px;border-top:1px solid #696969;border-left:1px solid #696969;border-right:1px solid #e3e3e3;border-bottom:1px solid #e3e3e3"></div>
<div class="a" style="left:766px;top:259px;width:17px;height:15px;background:#f0f0f0;border-top:1px solid #fff;border-left:1px solid #fff;border-right:1px solid #696969;border-bottom:1px solid #696969"></div>
<div class="a" style="left:772px;top:266px;width:0;height:0;border-left:3.5px solid transparent;border-right:3.5px solid transparent;border-top:4px solid #000"></div>
<div class="t" style="left:699.60px;top:261.84px;font-size:12px;color:#000;font-weight:normal;transform:scaleX(0.9522);transform-origin:0 0;">14/01/2026</div>
<div class="a" style="left:587px;top:290px;width:90px;height:21px;background:#fff;border-top:1px solid #a0a0a0;border-left:1px solid #a0a0a0;border-right:1px solid #fff;border-bottom:1px solid #fff"></div>
<div class="a" style="left:588px;top:291px;width:88px;height:19px;border-top:1px solid #696969;border-left:1px solid #696969;border-right:1px solid #e3e3e3;border-bottom:1px solid #e3e3e3"></div>
<div class="a" style="left:658px;top:292px;width:17px;height:8px;background:#f0f0f0;border-top:1px solid #fff;border-left:1px solid #fff;border-right:1px solid #696969;border-bottom:1px solid #696969"></div>
<div class="a" style="left:658px;top:300px;width:17px;height:9px;background:#f0f0f0;border-top:1px solid #fff;border-left:1px solid #fff;border-right:1px solid #696969;border-bottom:1px solid #696969"></div>
<div class="a" style="left:664px;top:294px;width:0;height:0;border-left:3px solid transparent;border-right:3px solid transparent;border-bottom:3px solid #000"></div>
<div class="a" style="left:664px;top:303px;width:0;height:0;border-left:3px solid transparent;border-right:3px solid transparent;border-top:3px solid #000"></div>
<div class="t" style="left:591.60px;top:294.84px;font-size:12px;color:#000;font-weight:normal;transform:scaleX(0.8844);transform-origin:0 0;">12:00:00 a. m</div>
<div class="a" style="left:695px;top:290px;width:90px;height:21px;background:#fff;border-top:1px solid #a0a0a0;border-left:1px solid #a0a0a0;border-right:1px solid #fff;border-bottom:1px solid #fff"></div>
<div class="a" style="left:696px;top:291px;width:88px;height:19px;border-top:1px solid #696969;border-left:1px solid #696969;border-right:1px solid #e3e3e3;border-bottom:1px solid #e3e3e3"></div>
<div class="a" style="left:766px;top:292px;width:17px;height:8px;background:#f0f0f0;border-top:1px solid #fff;border-left:1px solid #fff;border-right:1px solid #696969;border-bottom:1px solid #696969"></div>
<div class="a" style="left:766px;top:300px;width:17px;height:9px;background:#f0f0f0;border-top:1px solid #fff;border-left:1px solid #fff;border-right:1px solid #696969;border-bottom:1px solid #696969"></div>
<div class="a" style="left:772px;top:294px;width:0;height:0;border-left:3px solid transparent;border-right:3px solid transparent;border-bottom:3px solid #000"></div>
<div class="a" style="left:772px;top:303px;width:0;height:0;border-left:3px solid transparent;border-right:3px solid transparent;border-top:3px solid #000"></div>
<div class="t" style="left:699.60px;top:294.84px;font-size:12px;color:#000;font-weight:normal;transform:scaleX(0.8980);transform-origin:0 0;">11:59:59 p. m</div>
<div class="a" style="left:578px;top:321px;width:232px;height:356px;border-top:1px solid #a0a0a0;border-right:1px solid #a0a0a0;border-bottom:1px solid #a0a0a0"></div>
<div class="a" style="left:578px;top:322px;width:233px;height:356px;border-top:1px solid #fff;border-right:1px solid #fff;border-bottom:1px solid #fff"></div>
<div class="a" style="left:585px;top:318px;width:116px;height:8px;background:#fdbb48"></div>
<div class="t" style="left:586.30px;top:314.84px;font-size:12px;color:#000;font-weight:normal;transform:scaleX(0.8870);transform-origin:0 0;">Secuencia de impresión</div>
<div class="a" style="left:580px;top:332px;width:227px;height:341px;background:#fff;border:1px solid #a6b4c8"></div>
<div class="a" style="left:663px;top:333px;width:1px;height:18px;background:#e5e5e5"></div>
<div class="a" style="left:698px;top:333px;width:1px;height:18px;background:#e5e5e5"></div>
<div class="a" style="left:784px;top:333px;width:4px;height:18px;background:#ececec"></div>
<div class="a" style="left:581px;top:351px;width:207px;height:1px;background:#000"></div>
<div class="a" style="left:789px;top:333px;width:17px;height:323px;background:#f0f0f0"></div>
<div class="a" style="left:587px;top:656px;width:202px;height:16px;background:#f0f0f0"></div>
<div class="a" style="left:582px;top:655px;width:4px;height:16px;background:#000"></div>
<div class="t" style="left:610.80px;top:335.84px;font-size:12px;color:#000;font-weight:normal;transform:scaleX(0.8327);transform-origin:0 0;">Serie</div>
<div class="t" style="left:666.30px;top:335.84px;font-size:12px;color:#000;font-weight:normal;transform:scaleX(0.8964);transform-origin:0 0;">Incluir</div>
<div class="t" style="left:713.60px;top:335.84px;font-size:12px;color:#000;font-weight:normal;transform:scaleX(0.8752);transform-origin:0 0;">Folio cuenta</div>
<div class="a" style="left:664px;top:369px;width:34px;height:1px;background:#fbb040"></div>
<div class="a" style="left:664px;top:354px;width:13px;height:13px;background:#f2f2f2;border:1px solid #555;border-radius:2px"></div>
<div class="t" style="left:735.80px;top:355.34px;font-size:12px;color:#000;font-weight:normal;transform:scaleX(0.8556);transform-origin:0 0;">33</div>
<div class="a" style="left:581px;top:370px;width:203px;height:18px;background:#e8e8e8"></div>
<div class="a" style="left:664px;top:387px;width:34px;height:1px;background:#fbb040"></div>
<div class="a" style="left:664px;top:372px;width:13px;height:13px;background:#f2f2f2;border:1px solid #555;border-radius:2px"></div>
<div class="t" style="left:735.80px;top:373.34px;font-size:12px;color:#000;font-weight:normal;transform:scaleX(0.8556);transform-origin:0 0;">34</div>
<div class="a" style="left:664px;top:405px;width:34px;height:1px;background:#fbb040"></div>
<div class="a" style="left:664px;top:390px;width:13px;height:13px;background:#1a5fb4;border-radius:2px"></div>
<svg class="a" style="left:666px;top:393px" width="9" height="7" viewBox="0 0 9 7"><path d="M1 3.5L3.5 6L8 1" stroke="#fff" fill="none" stroke-width="1"/></svg>
<div class="t" style="left:735.80px;top:391.34px;font-size:12px;color:#000;font-weight:normal;transform:scaleX(0.8556);transform-origin:0 0;">35</div>
<div class="a" style="left:581px;top:406px;width:203px;height:18px;background:#e8e8e8"></div>
<div class="a" style="left:664px;top:423px;width:34px;height:1px;background:#fbb040"></div>
<div class="a" style="left:664px;top:408px;width:13px;height:13px;background:#f2f2f2;border:1px solid #555;border-radius:2px"></div>
<div class="t" style="left:735.80px;top:409.34px;font-size:12px;color:#000;font-weight:normal;transform:scaleX(0.8556);transform-origin:0 0;">36</div>
<div class="a" style="left:664px;top:441px;width:34px;height:1px;background:#fbb040"></div>
<div class="a" style="left:664px;top:426px;width:13px;height:13px;background:#f2f2f2;border:1px solid #555;border-radius:2px"></div>
<div class="t" style="left:735.80px;top:427.34px;font-size:12px;color:#000;font-weight:normal;transform:scaleX(0.8556);transform-origin:0 0;">37</div>
<div class="a" style="left:663px;top:352px;width:1px;height:303px;background:#000"></div>
<div class="a" style="left:698px;top:352px;width:1px;height:303px;background:#000"></div>
<div class="a" style="left:784px;top:352px;width:1px;height:303px;background:#000"></div>
<div class="a" style="left:581px;top:387px;width:207px;height:19px;border:1px solid #0078d7"></div>
<div class="a" style="left:663px;top:387px;width:1px;height:19px;background:#000"></div>
<div class="a" style="left:698px;top:387px;width:1px;height:19px;background:#000"></div>
<div class="a" style="left:664px;top:388px;width:34px;height:17px;border-left:1px solid #0078d7;border-right:1px solid #0078d7;border-top:1px solid #0078d7"></div>
<div class="a" style="left:824px;top:320px;width:95px;height:57px;background:#fc9f40"></div>
<div class="a" style="left:824px;top:380px;width:95px;height:57px;background:#fc9f40"></div>
<div class="t" style="left:837.98px;top:359.92px;font-size:12.5px;color:#000;font-weight:normal;transform:scaleX(1.0231);transform-origin:0 0;"><u>L</u>istar folios</div>
<div class="t" style="left:835.97px;top:419.92px;font-size:12.5px;color:#000;font-weight:normal;transform:scaleX(1.0314);transform-origin:0 0;"><u>L</u>impiar lista</div>
<div class="a" style="left:824px;top:496px;width:13px;height:13px;background:#f2f2f2;border:1px solid #555;border-radius:2px"></div>
<div class="t" style="left:839.76px;top:497.84px;font-size:12px;color:#000;font-weight:normal;transform:scaleX(0.8435);transform-origin:0 0;">Imprimir en:</div>
<div class="a" style="left:824px;top:524.5px;width:96px;height:21.0px;background:#fdf2cf;border:2px solid #b4cbe6"></div>
<div class="a" style="left:901px;top:527px;width:17px;height:17px;background:#f3f1ea"></div>
<svg class="a" style="left:905px;top:533px" width="9" height="6" viewBox="0 0 9 6"><path d="M0.5 0.5L4.5 4.5L8.5 0.5" stroke="#a0a0a0" fill="none" stroke-width="1"/></svg>
<div class="t" style="left:829.00px;top:530.34px;font-size:12px;color:#6d6d6d;font-weight:normal;transform:scaleX(0.8924);transform-origin:0 0;">Archivo</div>
<div class="a" style="left:824px;top:562px;width:95px;height:57px;background:#fc9f40"></div>
<div class="a" style="left:824px;top:622px;width:95px;height:57px;background:#fc9f40"></div>
<div class="t" style="left:853.60px;top:604.11px;font-size:10.5px;color:#0a2a0a;font-weight:normal;transform:scaleX(0.9008);transform-origin:0 0;"><u>I</u>mprimir</div>
<div class="t" style="left:858.60px;top:663.61px;font-size:10.5px;color:#0a2a0a;font-weight:normal;transform:scaleX(0.8428);transform-origin:0 0;">Cerrar</div>
<svg class="a" style="left:0;top:0" width="1102" height="706" viewBox="0 0 1102 706">
 <!-- scroll -->
 <defs><linearGradient id="pg" x1="0" y1="0" x2="0" y2="1"><stop offset="0" stop-color="#e2e4e6"/><stop offset="1" stop-color="#a8acb0"/></linearGradient></defs>
 <g>
  <path d="M859 324H881V353H886V359H861V333H856V327Q856 324 859 324Z" fill="url(#pg)"/>
  <path d="M856 327Q856 324 859 324H861V333H856Z" fill="#96999c"/>
  <rect x="861" y="326" width="1.5" height="33" fill="#b8bcc0"/>
  <rect x="864" y="330" width="14" height="1.2" fill="#1a4aa8"/>
  <rect x="864" y="334" width="14" height="1.2" fill="#1a4aa8"/>
  <rect x="864" y="338" width="14" height="1.2" fill="#2a8a8a"/>
  <rect x="864" y="341.5" width="14" height="1.2" fill="#2a8a8a"/>
  <rect x="864" y="345" width="14" height="1.2" fill="#1a4aa8"/>
  <rect x="864" y="349" width="14" height="1.2" fill="#1a4aa8"/>
  <path d="M881 356L883 354.5L885 353" stroke="#fff" stroke-width="1" fill="none"/>
 </g>
 <!-- brush -->
 <g>
  <path d="M877 399L886 390" stroke="#8e4a22" stroke-width="7" stroke-linecap="round"/>
  <path d="M866 397L871 392.5Q874 391.5 876 393.5L882.5 400Q884.5 402 883.5 405L880 411Z" fill="#8e4a22"/>
  <path d="M866 397L880 411L873.5 417L859.5 403Z" fill="#f5ae30"/>
  <path d="M859.5 403L873.5 417L872 418.5L858 404.5Z" fill="#fbd070"/>
  <rect x="853" y="408.5" width="6.5" height="2" rx="1" fill="#f8c050"/>
  <rect x="853" y="413.5" width="4.5" height="2" rx="1" fill="#f8c050"/>
  <rect x="860" y="413.5" width="9" height="2" rx="1" fill="#f0a838"/>
 </g>
 <!-- printer -->
 <g>
  <rect x="853" y="572" width="36" height="21" fill="#3a86e0"/>
  <rect x="859" y="572" width="25" height="6.7" fill="#1e2078"/>
  <rect x="873" y="573" width="10" height="5" fill="#28dc58"/>
  <rect x="853" y="581" width="36" height="1.2" fill="#1a5ab8"/>
  <rect x="859" y="587" width="25" height="6" fill="#1e2078"/>
  <rect x="860" y="588" width="22" height="9" rx="2" fill="#c4c4c8"/>
 </g>
 <!-- door -->
 <g>
  <rect x="871" y="631" width="5" height="26" fill="#0a1040"/>
  <path d="M872 641.5H879V637L886 644.5L879 652V647.5H872Z" fill="#22cc77"/>
  <path d="M856 631L872 626V662L856 657Z" fill="#9a5428"/>
  <rect x="859" y="634" width="4.5" height="9" fill="#5a1810"/>
  <rect x="865" y="633" width="4.5" height="9.5" fill="#5a1810"/>
  <rect x="859" y="647" width="4.5" height="9" fill="#5a1810"/>
  <rect x="865" y="647" width="4.5" height="10" fill="#5a1810"/>
 </g>
</svg>

</body></html>
